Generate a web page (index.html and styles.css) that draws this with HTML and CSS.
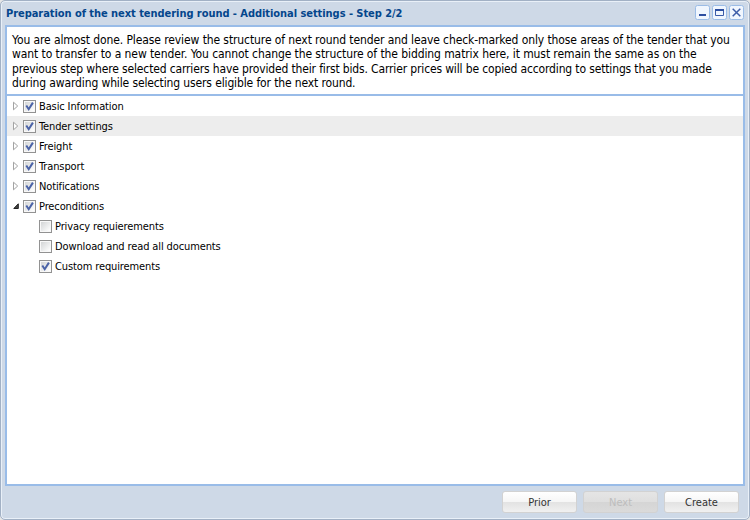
FILE: index.html
```
<!DOCTYPE html>
<html lang="en">
<head>
<meta charset="utf-8">
<title>Preparation of the next tendering round</title>
<link rel="stylesheet" href="styles.css">
</head>
<body>
<svg class="defs" aria-hidden="true">
  <defs>
    <linearGradient id="box" x1="0" y1="0" x2="1" y2="1"><stop offset="0" stop-color="#d3d5d6"/><stop offset="1" stop-color="#fff"/></linearGradient>
    <symbol id="off" viewBox="0 0 13 13"><rect x=".5" y=".5" width="12" height="12" fill="#f8f8f8" stroke="#929292"/><rect x="2" y="2" width="9" height="9" fill="url(#box)"/></symbol>
    <symbol id="on" viewBox="0 0 13 13"><use href="#off"/><path d="M3.3 5.5 5.7 9.2 9.9 2.6" fill="none" stroke="#4b63a7" stroke-width="2"/></symbol>
    <symbol id="closed" viewBox="0 0 8 10"><path d="M1.5 1.2v7.6L5.7 5z" fill="#fff" stroke="#a3a3a3"/></symbol>
    <symbol id="open" viewBox="0 0 8 10"><path d="M6.3 2.8v4.7H1.8z" fill="#444" stroke="#222"/></symbol>
  </defs>
</svg>
<div class="window">
  <header class="titlebar">
    <h1 class="title">Preparation of the next tendering round - Additional settings - Step 2/2</h1>
    <div class="tools">
      <svg class="tool" viewBox="0 0 15 15"><rect class="tool-box" x=".5" y=".5" width="14" height="14" rx="2"/><path d="M4 10h7" stroke="#2c4ea0" stroke-width="2"/></svg>
      <svg class="tool" viewBox="0 0 15 15"><rect class="tool-box" x=".5" y=".5" width="14" height="14" rx="2"/><path d="M3.5 4v6.5h8V4" fill="none" stroke="#3c5ca8"/><path d="M3 5h9" stroke="#2c4ea0" stroke-width="2"/></svg>
      <svg class="tool" viewBox="0 0 15 15"><rect class="tool-box" x=".5" y=".5" width="14" height="14" rx="2"/><path d="m3.7 3.7 7.6 7.6m0-7.6-7.6 7.6" stroke="#3c5ca8" stroke-width="1.5"/></svg>
    </div>
  </header>
  <main class="body">
    <p class="intro">
      <span class="line l1">You are almost done. Please review the structure of next round tender and leave check-marked only those areas of the tender that you</span>
      <span class="line l2">want to transfer to a new tender. You cannot change the structure of the bidding matrix here, it must remain the same as on the</span>
      <span class="line l3">previous step where selected carriers have provided their first bids. Carrier prices will be copied according to settings that you made</span>
      <span class="line l4">during awarding while selecting users eligible for the next round.</span>
    </p>
    <ul class="tree">
      <li class="row"><svg class="arrow"><use href="#closed"/></svg><svg class="check"><use href="#on"/></svg><span>Basic Information</span></li>
      <li class="row alt"><svg class="arrow"><use href="#closed"/></svg><svg class="check"><use href="#on"/></svg><span>Tender settings</span></li>
      <li class="row"><svg class="arrow"><use href="#closed"/></svg><svg class="check"><use href="#on"/></svg><span>Freight</span></li>
      <li class="row"><svg class="arrow"><use href="#closed"/></svg><svg class="check"><use href="#on"/></svg><span>Transport</span></li>
      <li class="row"><svg class="arrow"><use href="#closed"/></svg><svg class="check"><use href="#on"/></svg><span>Notifications</span></li>
      <li class="row"><svg class="arrow"><use href="#open"/></svg><svg class="check"><use href="#on"/></svg><span>Preconditions</span></li>
      <li class="row child"><svg class="check"><use href="#off"/></svg><span>Privacy requierements</span></li>
      <li class="row child"><svg class="check"><use href="#off"/></svg><span>Download and read all documents</span></li>
      <li class="row child"><svg class="check"><use href="#on"/></svg><span>Custom requirements</span></li>
    </ul>
  </main>
  <footer class="buttons">
    <button class="btn">Prior</button>
    <button class="btn" disabled>Next</button>
    <button class="btn">Create</button>
  </footer>
</div>
</body>
</html>
```
FILE: styles.css
```
* { box-sizing: border-box; }
body { margin: 0; background: #e6e6e6; font-family: "DejaVu Sans Condensed", "DejaVu Sans", sans-serif; font-stretch: condensed; color: #000; }
.defs { position: absolute; width: 0; height: 0; }
.window { width: 750px; height: 520px; display: flex; flex-direction: column; padding: 0 4px; background: #ced9e7; border: 1px solid #a2b1c5; border-radius: 5px; box-shadow: inset 0 0 0 1px #e9f0f8; }
.titlebar { height: 24px; display: flex; align-items: flex-start; justify-content: space-between; padding: 0 1px; }
.title { margin: 0; font-size: 11px; line-height: 25px; font-weight: bold; letter-spacing: -0.05px; color: #04468c; white-space: nowrap; }
.tools { display: flex; gap: 2px; padding-top: 4px; }
.tool { width: 15px; height: 15px; display: block; }
.tool-box { fill: #f0f6fe; stroke: #9bbce6; }
.body { height: 461px; border: 2px solid #99bce8; background: #fff; display: flex; flex-direction: column; }
.intro { margin: 0; height: 69px; padding: 6px 5px 0; border-bottom: 2px solid #99bce8; font-size: 12px; }
.line { display: block; width: max-content; height: 14.4px; line-height: 14.4px; white-space: nowrap; }
.l1 { letter-spacing: -0.1px; }
.l2 { letter-spacing: -0.09px; }
.l3 { letter-spacing: -0.145px; }
.l4 { letter-spacing: -0.13px; }
.tree { margin: 0; padding: 0; list-style: none; font-size: 11px; letter-spacing: -0.12px; }
.row { height: 20px; display: flex; align-items: center; padding-left: 5px; white-space: nowrap; }
.alt { background: #ededed; }
.child { padding-left: 32px; }
.arrow { width: 8px; height: 10px; margin-right: 3px; }
.check { width: 13px; height: 13px; margin-right: 3px; }
.buttons { display: flex; justify-content: flex-end; gap: 6px; padding: 5px 6px 0 0; }
.btn { width: 75px; height: 22px; padding: 0; border: 1px solid #d2d2d2; border-radius: 3px; background: linear-gradient(#fff, #f6f6f6 48%, #e3e3e3 52%, #f0f0f0); font: inherit; font-size: 11px; color: #333; }
.btn:disabled { background: linear-gradient(#e5e5e5, #dfdfdf 48%, #d5d5d5 52%, #dadada); color: #bdbdbd; }
```
